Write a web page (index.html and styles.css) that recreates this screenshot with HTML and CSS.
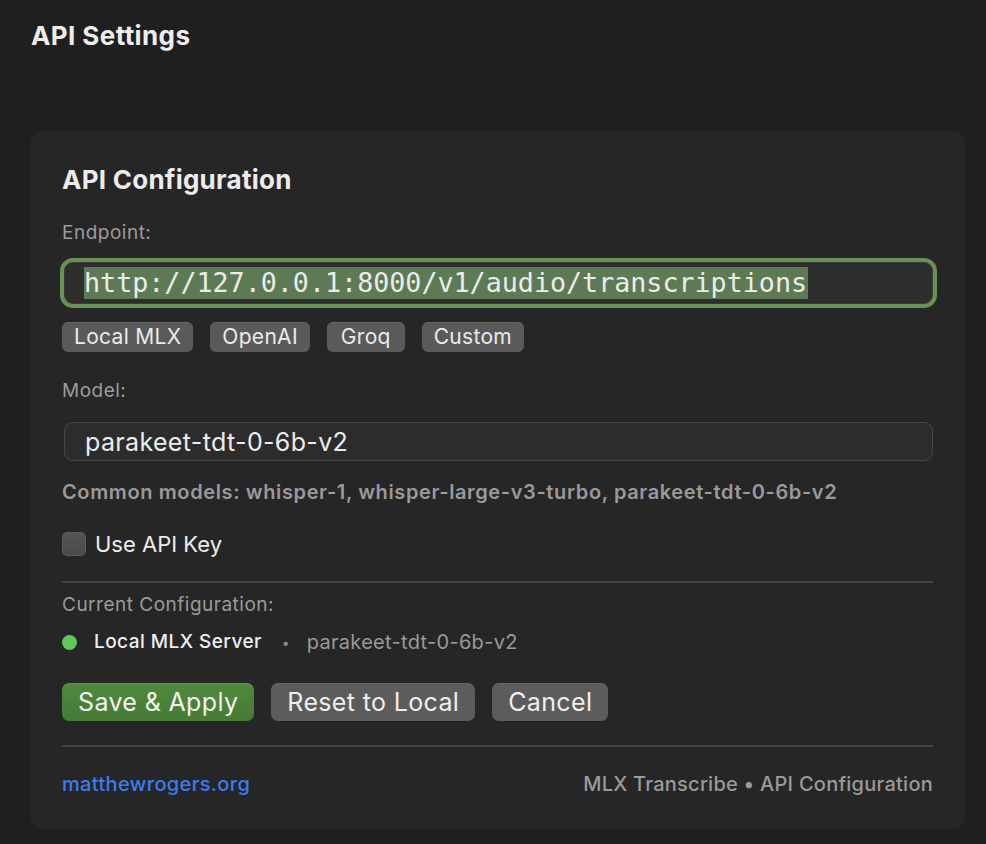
FILE: index.html
```html
<!DOCTYPE html>
<html lang="en">
<head>
<meta charset="utf-8">
<title>API Settings</title>
<link rel="stylesheet" href="styles.css">
</head>
<body>
<div class="window">
  <h1 class="title">API Settings</h1>
  <section class="card">
    <h2 class="card-title">API Configuration</h2>

    <div class="label label-endpoint">Endpoint:</div>
    <div class="field field-focus">
      <span class="mono-sel">http://127.0.0.1:8000/v1/audio/transcriptions</span>
    </div>
    <div class="chips">
      <span class="chip">Local MLX</span>
      <span class="chip">OpenAI</span>
      <span class="chip">Groq</span>
      <span class="chip">Custom</span>
    </div>

    <div class="label label-model">Model:</div>
    <div class="field field-model">parakeet-tdt-0-6b-v2</div>
    <div class="hint">Common models: whisper-1, whisper-large-v3-turbo, parakeet-tdt-0-6b-v2</div>

    <label class="check-row">
      <span class="checkbox"></span>
      <span class="check-text">Use API Key</span>
    </label>

    <hr class="divider divider-1">

    <div class="label label-current">Current Configuration:</div>
    <div class="status">
      <span class="dot"></span>
      <span class="status-name">Local MLX Server</span>
      <span class="status-sep">•</span>
      <span class="status-model">parakeet-tdt-0-6b-v2</span>
    </div>

    <div class="actions">
      <button class="btn btn-primary">Save &amp; Apply</button>
      <button class="btn">Reset to Local</button>
      <button class="btn">Cancel</button>
    </div>

    <hr class="divider divider-2">

    <footer class="footer">
      <a class="footer-link" href="#">matthewrogers.org</a>
      <span class="footer-meta">MLX Transcribe • API Configuration</span>
    </footer>
  </section>
</div>
</body>
</html>
```

FILE: styles.css
```css
* { box-sizing: border-box; }

html, body {
  margin: 0;
  padding: 0;
  background: #1f1f1f;
}

body {
  font-family: Inter, "Noto Sans", "Liberation Sans", sans-serif;
  color: #ececec;
  width: 986px;
  height: 844px;
  overflow: hidden;
}

.window {
  padding: 20px 0 0 31px;
}

.title {
  margin: 0;
  font-size: 26px;
  line-height: 32px;
  font-weight: 700;
  color: #ededed;
  letter-spacing: 0.4px;
}

.card {
  margin: 79px 0 0 -1px;
  width: 935px;
  background: #262626;
  border-radius: 13px;
  padding: 33px 32px 33px 32px;
}

.card-title {
  margin: 0;
  font-size: 26px;
  line-height: 32px;
  font-weight: 700;
  color: #ececec;
  letter-spacing: 0.25px;
}

.label {
  font-size: 19px;
  line-height: 22px;
  color: #9b9b9b;
  letter-spacing: 0.5px;
}

.label-endpoint { margin-top: 26px; }
.label-model { margin-top: 28px; }
.label-current { margin-top: 11px; }

.field {
  margin: 0 0 0 2px;
  width: 869px;
  background: #2e2e2e;
  border: 1px solid #444;
  border-radius: 9px;
  display: flex;
  align-items: center;
}

.field-focus {
  margin-top: 18px;
  height: 42px;
  padding-left: 19px;
  box-shadow: 0 0 0 4px #699154;
  border-color: #3a3a3a;
}

.mono-sel {
  font-family: "DejaVu Sans Mono", "Liberation Mono", monospace;
  font-size: 26.7px;
  line-height: 32px;
  background: #5e7a55;
  color: #ececec;
  display: inline-block;
  padding-right: 1px;
}

.chips {
  margin-top: 18px;
  display: flex;
  gap: 17px;
}

.chip {
  height: 30px;
  padding: 0 12px;
  border-radius: 6px;
  background: #5a5a5a;
  color: #ebebeb;
  font-size: 21px;
  line-height: 30px;
  letter-spacing: 0.3px;
  box-shadow: inset 0 1px 0 rgba(255,255,255,0.08);
}

.chip:nth-child(3) { padding: 0 14px; }

.field-model {
  margin-top: 20px;
  height: 39px;
  padding-left: 20px;
  font-size: 25px;
  letter-spacing: 0.35px;
  color: #ececec;
  background: #2c2c2c;
  border-color: #474747;
}

.hint {
  margin-top: 20px;
  font-size: 20px;
  line-height: 22px;
  font-weight: 600;
  color: #9a9a9a;
  letter-spacing: 0.62px;
}

.check-row {
  margin-top: 29px;
  display: flex;
  align-items: center;
  gap: 9px;
  height: 24px;
}

.checkbox {
  width: 24px;
  height: 24px;
  border-radius: 5px;
  background: linear-gradient(#545454, #4a4a4a);
  border: 1px solid #5c5c5c;
}

.check-text {
  font-size: 22px;
  line-height: 24px;
  color: #ececec;
}

.divider {
  margin: 0;
  border: 0;
  height: 2px;
  background: #414141;
}

.divider-1 { margin-top: 25px; }
.divider-2 { margin-top: 24px; }

.status {
  margin-top: 15px;
  display: flex;
  align-items: center;
  height: 22px;
}

.dot {
  width: 15px;
  height: 15px;
  border-radius: 50%;
  background: #5fc958;
  margin-right: 17px;
}

.status-name {
  font-size: 19px;
  line-height: 22px;
  font-weight: 500;
  color: #efefef;
  letter-spacing: 0.45px;
}

.status-sep {
  font-size: 14px;
  color: #8a8a8a;
  margin: 0 17px 0 20px;
}

.status-model {
  font-size: 20px;
  line-height: 22px;
  color: #999;
  letter-spacing: 0.3px;
}

.actions {
  margin-top: 30px;
  display: flex;
  gap: 17px;
}

.btn {
  font-family: inherit;
  height: 38px;
  padding: 0 16px;
  border: 0;
  border-radius: 7px;
  background: #5c5c5c;
  color: #eeeeee;
  font-size: 25px;
  line-height: 38px;
  letter-spacing: 0.35px;
  box-shadow: inset 0 1px 0 rgba(255,255,255,0.08);
}

.btn-primary {
  background: linear-gradient(#4f8a3d, #467a36);
  color: #f2f2f2;
}

.footer {
  margin-top: 25px;
  display: flex;
  justify-content: space-between;
  align-items: center;
  height: 24px;
}

.footer-link {
  font-size: 20px;
  line-height: 24px;
  font-weight: 500;
  color: #3a7cf2;
  text-decoration: none;
  letter-spacing: 0.35px;
}

.footer-meta {
  font-size: 20px;
  line-height: 24px;
  font-weight: 500;
  color: #9a9a9a;
  letter-spacing: 0.25px;
}
```
